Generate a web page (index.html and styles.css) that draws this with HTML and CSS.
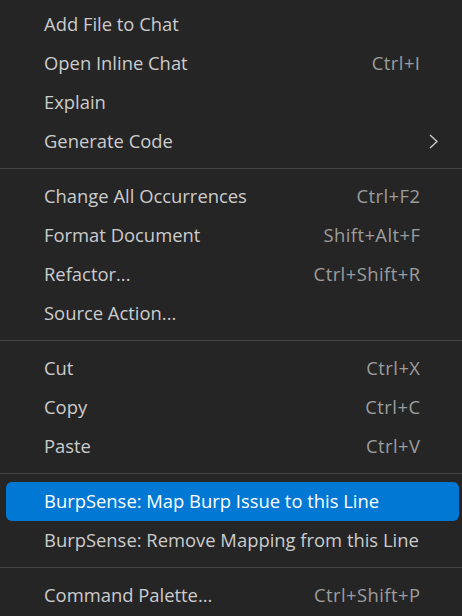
FILE: index.html
```html
<!DOCTYPE html>
<html>
<head>
<meta charset="utf-8">
<link rel="stylesheet" href="styles.css">
</head>
<body>
<div class="menu">
  <div class="item"><span class="label">Add File to Chat</span></div>
  <div class="item"><span class="label">Open Inline Chat</span><span class="key">Ctrl+I</span></div>
  <div class="item"><span class="label">Explain</span></div>
  <div class="item"><span class="label">Generate Code</span>
    <svg class="chev" width="9" height="15" viewBox="0 0 9 15"><path d="M1 1 L8 7.5 L1 14" fill="none" stroke="#cccccc" stroke-width="1.4"/></svg>
  </div>
  <div class="sep"></div>
  <div class="item"><span class="label">Change All Occurrences</span><span class="key">Ctrl+F2</span></div>
  <div class="item"><span class="label">Format Document</span><span class="key">Shift+Alt+F</span></div>
  <div class="item"><span class="label">Refactor...</span><span class="key">Ctrl+Shift+R</span></div>
  <div class="item"><span class="label">Source Action...</span></div>
  <div class="sep"></div>
  <div class="item"><span class="label">Cut</span><span class="key">Ctrl+X</span></div>
  <div class="item"><span class="label">Copy</span><span class="key">Ctrl+C</span></div>
  <div class="item"><span class="label">Paste</span><span class="key">Ctrl+V</span></div>
  <div class="sep"></div>
  <div class="item active"><span class="label">BurpSense: Map Burp Issue to this Line</span></div>
  <div class="item"><span class="label">BurpSense: Remove Mapping from this Line</span></div>
  <div class="sep"></div>
  <div class="item"><span class="label">Command Palette...</span><span class="key">Ctrl+Shift+P</span></div>
</div>
</body>
</html>
```

FILE: styles.css
```css
html, body {
  margin: 0;
  padding: 0;
  background: #252526;
  width: 462px;
  height: 616px;
  overflow: hidden;
}
.menu {
  padding: 5px 3px 0 0;
  font-family: "Segoe UI", "Open Sans", "Noto Sans", sans-serif;
  font-size: 18.4px;
  color: #cccccc;
}
.item {
  height: 39px;
  box-sizing: border-box;
  margin-left: 6px;
  padding: 0 39px 2px 38px;
  display: flex;
  align-items: center;
  border-radius: 6px;
}
.label {
  flex: 1;
  white-space: nowrap;
}
.key {
  color: #9d9d9d;
  white-space: nowrap;
  letter-spacing: 0.45px;
  margin-right: -0.45px;
}
.chev {
  margin-right: -18px;
  margin-top: 2px;
  display: block;
}
.active {
  background: #0078d4;
  color: #ffffff;
}
.sep {
  height: 1px;
  background: #454545;
  margin: 7px -3px 8px 0;
}
```
